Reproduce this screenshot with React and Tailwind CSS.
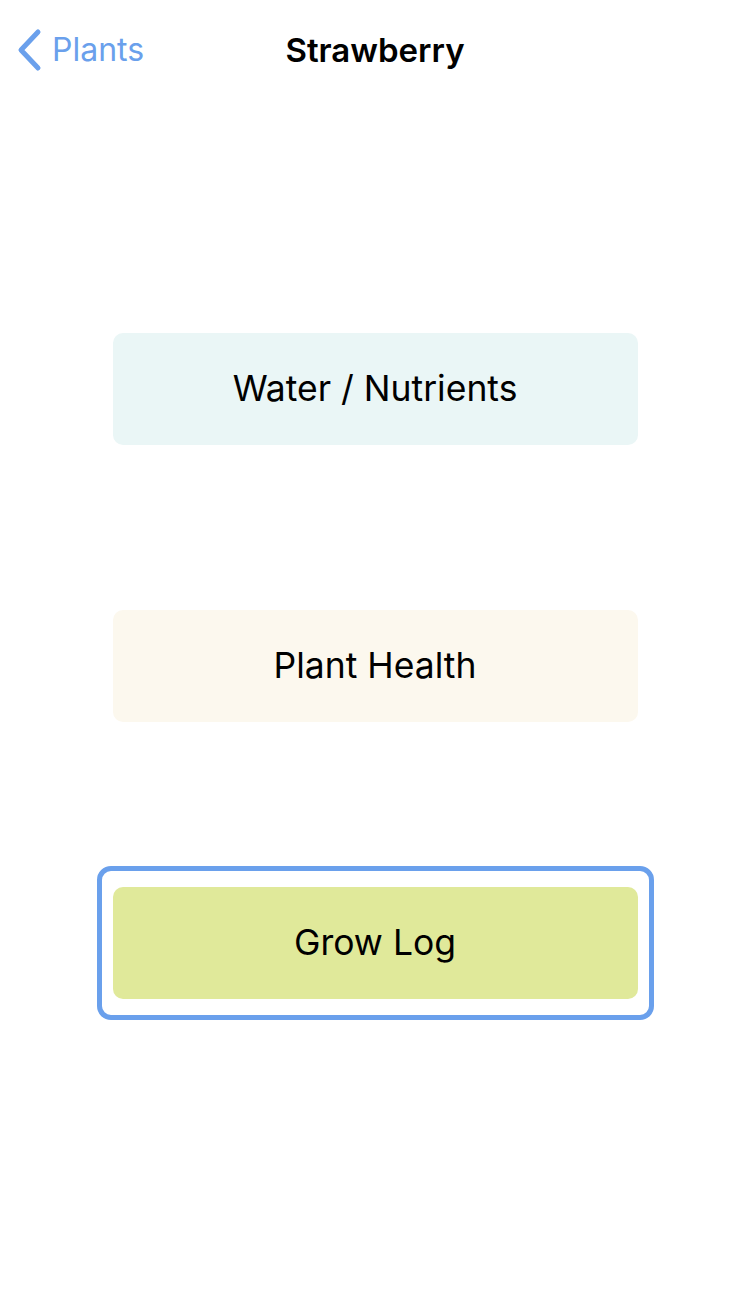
import React, { useState } from "react";

const items = [
  { label: "Water / Nutrients", bg: "bg-[#eaf6f6]" },
  { label: "Plant Health", bg: "bg-[#fcf8ee]" },
  { label: "Grow Log", bg: "bg-[#e0e99a]" },
];

const App = () => {
  const [focused, setFocused] = useState(2);

  return (
    <div className="w-[750px] h-[1300px] bg-white font-['Inter',sans-serif] text-black">
      {/* nav bar */}
      <div className="relative h-[100px] flex items-center justify-center">
        <button className="absolute left-[16px] top-[28px] flex items-center gap-[8px] text-[#6aa0ec]">
          <svg width="28" height="44" viewBox="0 0 28 44" fill="none">
            <polyline
              points="22,4 5,22 22,40"
              stroke="#6aa0ec"
              strokeWidth="5"
              strokeLinecap="round"
              strokeLinejoin="round"
            />
          </svg>
          <span className="text-[32px] leading-none">Plants</span>
        </button>
        <h1 className="text-[33px] font-semibold leading-none">Strawberry</h1>
      </div>

      <div className="flex flex-col items-center gap-[123px] mt-[212px]">
        {items.map((item, i) => (
          <div
            key={item.label}
            onClick={() => setFocused(i)}
            className={
              "border-[5px] rounded-[14px] px-[11px] py-[16px] " +
              (focused === i ? "border-[#6aa0ec]" : "border-transparent")
            }
          >
            <button
              className={
                "w-[525px] h-[112px] rounded-[10px] flex items-center justify-center text-[35.5px] " +
                item.bg
              }
            >
              {item.label}
            </button>
          </div>
        ))}
      </div>
    </div>
  );
};

export default App;
